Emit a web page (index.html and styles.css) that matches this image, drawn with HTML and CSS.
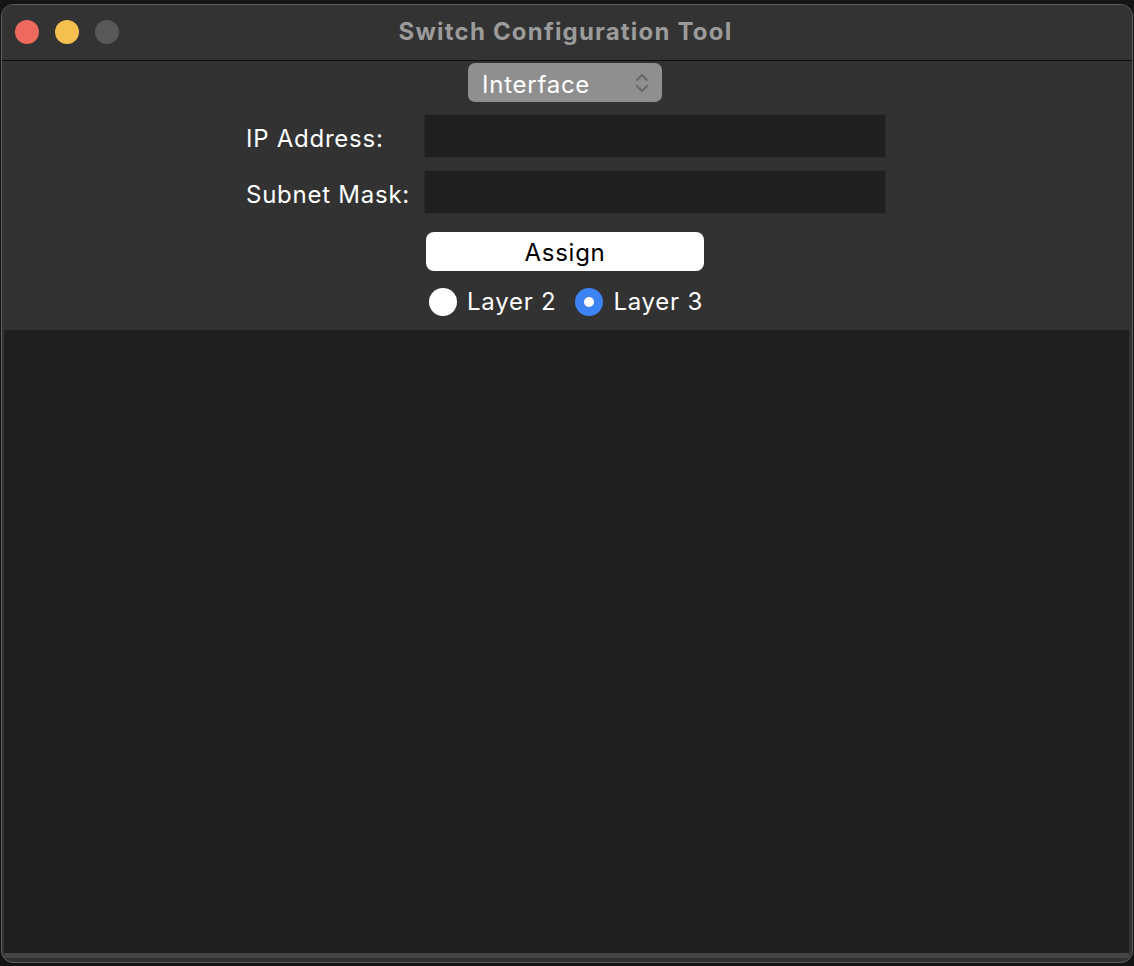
FILE: index.html
```html
<!DOCTYPE html>
<html>
<head>
<meta charset="utf-8">
<title>Switch Configuration Tool</title>
<link rel="stylesheet" href="styles.css">
</head>
<body>
<div class="window">
  <header class="titlebar">
    <div class="lights">
      <span class="light red"></span>
      <span class="light yellow"></span>
      <span class="light gray"></span>
    </div>
    <div class="title">Switch Configuration Tool</div>
  </header>
  <main class="content">
    <div class="popup">
      <span class="popup-label">Interface</span>
      <svg class="chevrons" width="14" height="22" viewBox="0 0 14 22">
        <path d="M2 8 L7 3 L12 8" fill="none" stroke="#6a6a6a" stroke-width="2.2" stroke-linecap="round" stroke-linejoin="round"/>
        <path d="M2 14 L7 19 L12 14" fill="none" stroke="#6a6a6a" stroke-width="2.2" stroke-linecap="round" stroke-linejoin="round"/>
      </svg>
    </div>
    <div class="form">
      <label class="label">IP Address:</label>
      <div class="field"></div>
      <label class="label">Subnet Mask:</label>
      <div class="field"></div>
    </div>
    <button class="assign">Assign</button>
    <div class="radios">
      <div class="radio"><span class="dot"></span><span>Layer 2</span></div>
      <div class="radio"><span class="dot on"></span><span>Layer 3</span></div>
    </div>
  </main>
  <section class="output"></section>
</div>
</body>
</html>
```
FILE: styles.css
```css
* { box-sizing: border-box; }
html, body {
  margin: 0;
  padding: 0;
  background: #141414;
  width: 1134px;
  height: 966px;
  overflow: hidden;
  font-family: Inter, "Noto Sans", "Liberation Sans", sans-serif;
}
.window {
  margin: 4px 0 0 1px;
  width: 1132px;
  height: 959px;
  background: #323232;
  border: 1px solid #5e5e5e;
  border-radius: 12px;
  display: flex;
  flex-direction: column;
  overflow: hidden;
  padding-bottom: 4px;
}
.titlebar {
  height: 56px;
  flex: none;
  display: flex;
  align-items: center;
  justify-content: center;
  position: relative;
  border-bottom: 1px solid #0c0c0c;
  background: #333333;
}
.lights {
  position: absolute;
  left: 13px;
  top: 15px;
  display: flex;
  gap: 16px;
}
.light {
  width: 24px;
  height: 24px;
  border-radius: 50%;
  display: block;
}
.red { background: #ee6a5e; }
.yellow { background: #f5c04f; }
.gray { background: #595959; }
.title {
  color: #9b9b9b;
  font-weight: 700;
  font-size: 24px;
  letter-spacing: 1.2px;
  margin-left: -3px;
  margin-top: -2px;
}
.content {
  flex: none;
  height: 269px;
  display: flex;
  flex-direction: column;
  align-items: center;
  padding-top: 2px;
  padding-right: 4px;
  color: #ffffff;
  font-size: 24px;
  letter-spacing: 0.75px;
}
.popup {
  width: 194px;
  height: 39px;
  background: #8f8f8f;
  border-radius: 7px;
  display: flex;
  align-items: center;
  padding: 3px 13px 0 14px;
  justify-content: space-between;
}
.popup-label {
  color: #ffffff;
}
.chevrons { display: block; margin-top: -3px; }
.form {
  margin-top: 12px;
  display: grid;
  grid-template-columns: 178px 462px;
  row-gap: 12px;
  align-items: center;
  margin-left: 2px;
}
.label {
  color: #ffffff;
  padding-top: 5px;
}
.field {
  height: 44px;
  background: #1f1f1f;
  border: 1px solid #2a2a2a;
}
.assign {
  margin-top: 18px;
  width: 278px;
  height: 39px;
  border: none;
  border-radius: 8px;
  background: #ffffff;
  color: #000000;
  font-family: inherit;
  font-size: 24px;
  letter-spacing: 0.75px;
  padding: 1px 0 0 0;
}
.radios {
  margin-top: 16px;
  display: flex;
  gap: 19px;
  margin-left: 2px;
}
.radio {
  display: flex;
  align-items: center;
  gap: 10px;
}
.dot {
  width: 28px;
  height: 28px;
  border-radius: 50%;
  background: #ffffff;
  display: block;
  position: relative;
}
.dot.on { background: #3c83f3; }
.dot.on::after {
  content: "";
  position: absolute;
  left: 9px;
  top: 9px;
  width: 10px;
  height: 10px;
  border-radius: 50%;
  background: #ffffff;
}
.output {
  flex: 1;
  background: #1f1f1f;
  margin: 0 3px 0 2px;
  border-bottom: 5px solid #454545;
}
```
